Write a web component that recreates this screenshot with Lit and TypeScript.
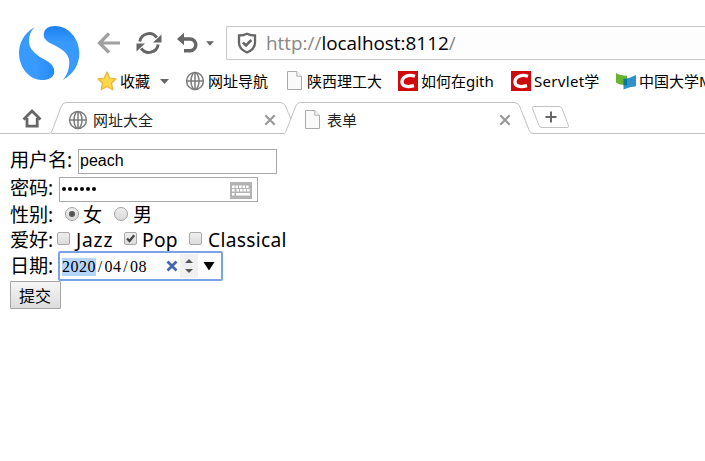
import { LitElement, html, svg, css } from "lit";
import { customElement } from "lit/decorators.js";

const globe = html`<svg width="20" height="20" viewBox="0 0 20 20" fill="none" stroke="#7c7c7c" stroke-width="1.5">
  <circle cx="10" cy="10" r="8.4"/><ellipse cx="10" cy="10" rx="4" ry="8.4"/><path d="M10 1.6V18.4M1.6 10H18.4"/></svg>`;
const page = html`<svg width="16" height="20" viewBox="0 0 16 20" fill="#fafafa" stroke="#aaa">
  <path d="M.5 .5H9.8L14.5 5.2V18.5H.5Z"/><path d="M9.8 .5V5.2H14.5"/></svg>`;
const redC = html`<svg width="20" height="20" viewBox="0 0 20 20"><rect width="20" height="20" fill="#cf0a0c"/>
  <path d="M17 5.3C10.5 2.9 4 5.6 4 10.9C4 15.6 9.5 16.4 16 14.7" fill="none" stroke="#fff" stroke-width="3.3"/></svg>`;
const mooc = html`<svg width="20" height="18" viewBox="0 0 20 18"><path d="M0 1Q4 3.8 11 3.8V13Q4 13.500 0 10.500Z" fill="#65b32e"/>
  <path d="M7.5 7Q14 6.200 20 3V14.200Q14 14.500 7.5 17.500Z" fill="#2d92c9"/><path d="M7.500 7Q9.500 6.900 11 6.400V13L7.500 13.200Z" fill="#08759b"/></svg>`;
const star = html`<svg width="20" height="20" viewBox="0 0 20 20"><path d="M10 1L12.8 7L19.2 7.8L14.5 12.2L15.8 18.8L10 15.5L4.2 18.8L5.5 12.2L.8 7.8L7.2 7Z"
  fill="#fdd74a" stroke="#edb33c" stroke-width="1.2" stroke-linejoin="round"/></svg>`;
const cross = html`<svg class="close" width="12" height="12" viewBox="0 0 12 12"><path d="M1.3 1.3L10.7 10.7M10.7 1.3L1.3 10.7" stroke="#999" stroke-width="2.2"/></svg>`;

const bookmarks = [
  { icon: star, text: "收藏", cls: "w-fav" },
  { icon: globe, text: "网址导航", cls: "w-nav" },
  { icon: page, text: "陕西理工大", cls: "w-uni" },
  { icon: redC, text: "如何在gith", cls: "w-git" },
  { icon: redC, text: "Servlet学", cls: "w-srv" },
  { icon: mooc, text: "中国大学M", cls: "w-mooc" },
];

@customElement("browser-chrome")
class BrowserChrome extends LitElement {
  static styles = css`
    :host { display: block; height: 134px; overflow: hidden; color: #111;
      font-family: "Noto Sans", "Noto Sans CJK SC", sans-serif; }
    svg { display: block; flex: none; }
    .top { display: grid; grid-template-columns: 97px 1fr; height: 102px; }
    .logo { padding: 25px 0 0 18px; }
    .tools { display: flex; align-items: center; margin-top: 26px; height: 34px; }
    .back { margin-right: 15px; } .reload { margin-right: 15px; } .undo { margin-right: 8px; }
    .drop { margin-right: 12px; }
    .address { box-sizing: border-box; flex: 1; height: 34px; border: 1px solid #c8c8c8; border-right: 0;
      border-radius: 2px 0 0 2px; display: flex; align-items: center; padding-left: 10px; background: #fdfdfd; }
    .url { margin-left: 9px; font: 18.9px/30px "Open Sans", sans-serif; color: #888; white-space: nowrap; }
    .url b { font-weight: 400; color: #000; }
    .marks { display: flex; align-items: center; height: 20px; margin-top: 11px; }
    .mark { display: flex; align-items: center; flex: none; font-size: 15px; line-height: 20px; white-space: nowrap; color: #000; }
    .w-fav { width: 88px; } .w-nav { width: 102px; } .w-uni { width: 111px; }
    .w-git { width: 113px; } .w-srv { width: 105px; }
    .w-srv span { letter-spacing: .3px; }
    .mark span { margin-left: 3px; }
    .w-fav .caret { margin-left: 10px; }
    .w-uni span { margin-left: 4px; }
    .strip { display: grid; height: 32px; }
    .strip > * { grid-area: 1 / 1; }
    .tabs { display: flex; align-items: center; height: 35px; font-size: 15px; color: #222; }
    .home { margin-left: 22px; width: 46px; margin-bottom: 2px; }
    .tab { display: flex; align-items: center; box-sizing: border-box; }
    .tab.one { width: 237px; padding-right: 29px; }
    .tab.two { width: 228px; padding-right: 22px; }
    .tab span { margin-left: 5px; } .tab.two span { margin-left: 6px; }
    .tab .close { margin-left: auto; }
  `;
  render() {
    return html`
      <div class="top">
        <svg class="logo" width="62" height="58" viewBox="0 0 62 58">
          <defs><linearGradient id="g" x2="0" y2="1"><stop stop-color="#1c80ee"/><stop offset=".3" stop-color="#3899ff"/></linearGradient>
          <linearGradient id="h" x2="1" y2="0"><stop offset=".5" stop-color="#3899ff"/><stop offset="1" stop-color="#258af5"/></linearGradient></defs>
          <path d="M16.700 2.300C6 8 1 18 1 28C1 43 12 55 23.700 55C31.500 55 36.300 51.500 36.300 46.700C36.300 38 27.500 35.500 22 32C14.500 27 11 22 11 16C11 10 13 5.500 16.700 2.300Z" fill="url(#h)"/>
          <path d="M25.700 10C25.700 4 30.500 1 37 1C50 1 61.300 13 61.300 28.300C61.300 40 55 49.500 44.700 55C49 50.500 51.300 44 51.300 37C51.300 29 44 24 37 20.500C31.500 18 25.700 15 25.700 10Z" fill="url(#g)"/>
        </svg>
        <div>
          <div class="tools">
            <svg class="back" width="24" height="22" viewBox="0 0 24 22" fill="none" stroke="#a0a0a0" stroke-width="3.2"><path d="M23 11H3M12 1.500L2.500 11L12 20.500"/></svg>
            <svg class="reload" width="26" height="24" viewBox="0 0 26 24" fill="none" stroke="#666" stroke-width="3">
              <path d="M3.800 10.500A9.400 9.400 0 0 1 20.800 6.700M22.200 13.500A9.400 9.400 0 0 1 5.200 17.300"/>
              <path d="M25.500 3.500V11.500H17ZM.5 20.500V12.500H9Z" fill="#666" stroke="none"/></svg>
            <svg class="undo" width="21" height="22" viewBox="0 0 21 22"><path d="M5 7H13A5.800 5.800 0 0 1 13 18.700H7" fill="none" stroke="#666" stroke-width="3.400"/><path d="M0 7L7 .8V13.200Z" fill="#666"/></svg>
            <svg class="drop" width="8" height="5" viewBox="0 0 8 5"><path d="M0 .3H8L4 4.700Z" fill="#666"/></svg>
            <div class="address">
              <svg width="20" height="22" viewBox="0 0 20 22" fill="none" stroke="#666" stroke-width="2.300"><path d="M10 1.700Q13.500 3.500 18 3.500V11Q18 17 10 20.500Q2 17 2 11V3.500Q6.500 3.500 10 1.700Z"/><path d="M5.800 10.500L9 13.500L14.300 8" stroke-width="2.600"/></svg>
              <span class="url">http://<b>localhost:8112</b>/</span>
            </div>
          </div>
          <div class="marks">
            ${bookmarks.map((m, i) => html`<div class="mark ${m.cls}">${m.icon}<span>${m.text}</span>${i === 0
              ? html`<svg class="caret" width="9" height="5" viewBox="0 0 9 5"><path d="M0 0H9L4.500 5Z" fill="#666"/></svg>` : ""}</div>`)}
          </div>
        </div>
      </div>
      <div class="strip">
        <svg width="705" height="32" viewBox="0 0 705 32" fill="none" stroke="#c2c2c2">
          <path d="M0 31.500H49Q51 31.500 52 29L61 5Q62.500 .5 66 .5H280Q284 .5 285.500 4L291 17"/>
          <path d="M51 31.500H284Q285.500 31 286 29L295.500 5Q297 .5 301 .5H514Q518 .5 519.500 4L529 28Q530.500 31.500 533 31.500H705"/>
          <path d="M534 4.500H559Q561 4.500 562 6.500L568.500 23.500Q569 25.500 567 25.500H542Q540 25.500 539 23.500L532.500 6.500Q532 4.500 534 4.500Z"/>
          <path d="M545.500 15H556.500M551 9.500V20.500" stroke="#666" stroke-width="2"/>
        </svg>
        <div class="tabs">
          <svg class="home" width="46" height="20" viewBox="0 0 46 20" fill="none" stroke="#666" stroke-width="2.800"><path d="M1.500 10.500L10 2L18.500 10.500M5 9V17.200H15.200V9"/></svg>
          <div class="tab one">${globe}<span>网址大全</span>${cross}</div>
          <div class="tab two">${page}<span>表单</span>${cross}</div>
        </div>
      </div>`;
  }
}

@customElement("profile-form")
class ProfileForm extends LitElement {
  static styles = css`
    :host { display: block; padding: 15px 0 0 10px; color: #000;
      font: 19.2px/25px "Noto Sans", "Noto Sans CJK SC", sans-serif; }
    .row { display: flex; align-items: center; white-space: nowrap; }
    .r1 { height: 25px; margin-bottom: 3px; }
    .r2 { height: 25px; } .r3 { height: 26px; } .r4 { height: 23px; } .r5 { height: 30px; }
    .label { width: 49px; flex: none; letter-spacing: -.2px; padding-bottom: 4px; }
    .r1 .label { width: 68px; }
    .r2 .label { padding-bottom: 5px; }
    .r3 .label { width: 55px; padding-bottom: 1px; }
    .r4 .label { width: 47px; padding-bottom: 0; }
    .r5 .label { width: 48px; padding-bottom: 2px; }
    .box { box-sizing: border-box; width: 199px; height: 25px; border: 1px solid #a9a9a9; background: #fff;
      display: flex; align-items: center; padding: 0 5px 0 1px; font: 16px/20px "Liberation Sans", sans-serif; }
    .r1 .box { padding-bottom: 1px; }
    svg { display: block; flex: none; }
    .keys { margin-left: auto; margin-top: 2px; }
    .radio { box-sizing: border-box; width: 14px; height: 14px; border: 1px solid #a2a2a2; border-radius: 50%;
      background: linear-gradient(#eee, #d9d9d9); display: grid; place-items: center; flex: none; margin-bottom: 2px; }
    .radio.on::after { content: ""; width: 6px; height: 6px; border-radius: 50%; background: #555; }
    .r3 .txt { margin-left: 5px; padding-bottom: 1px; } .r3 .first { width: 31px; margin-left: 4px; }
    .check { box-sizing: border-box; width: 13px; height: 13px; border: 1px solid #a8a8a8; border-radius: 2px;
      background: linear-gradient(#eee, #dcdcdc); flex: none; margin-bottom: 3px; }
    .r4 .txt { margin-left: 6px; letter-spacing: .3px; }
    .r4 .jazz { width: 48px; letter-spacing: .8px; } .r4 .pop { width: 47px; margin-left: 5px; }
    .date { box-sizing: border-box; width: 165px; height: 30px; border: 2px solid #7ba2e7; border-radius: 2px;
      display: flex; align-items: center; padding-left: 2px; background: #fff; }
    .digits { font: 16px/18px "Liberation Serif", serif; letter-spacing: .5px; width: 104px; padding-top: 1px; }
    .digits mark { background: #b4d5fe; color: inherit; display: inline-block; }
    .digits i { font-style: normal; display: inline-block; width: 8.500px; text-align: center; }
    .spin { width: 18px; height: 24px; background: #f0f0f0; display: grid; place-items: center; margin: 0 5px 0 2px; }
    .submit { box-sizing: border-box; display: block; width: 51px; height: 28px; border: 1px solid #a5a5a5; border-radius: 1px; padding: 0 1px 1px 0;
      background: linear-gradient(#f6f6f6, #dcdcdc); font: 16px/24px "Noto Sans CJK SC", sans-serif; color: #000; }
  `;
  render() {
    const keys = [[2, 3.500], [5.500, 3.500], [9, 3.500], [12.500, 3.500], [16, 3.500], [2, 7], [6.500, 7], [10, 7], [13.500, 7], [17, 7]];
    return html`
      <div class="row r1"><span class="label">用户名:</span><div class="box">peach</div></div>
      <div class="row r2"><span class="label">密码:</span><div class="box">
        <svg width="36" height="6" viewBox="0 0 36 6">${[0, 1, 2, 3, 4, 5].map(i => svg`<circle cx=${3 + i * 6} cy="2" r="2" fill="#000"/>`)}</svg>
        <svg class="keys" width="22" height="17" viewBox="0 0 22 17"><rect width="22" height="17" fill="#b3b3b3"/>
          ${keys.map(([x, y]) => svg`<rect x=${x} y=${y} width="2.6" height="2.5" fill="#fff"/>`)}
          <path d="M2 11H4.500V13.500H2ZM6 11H20V13.500H6Z" fill="#fff"/></svg></div></div>
      <div class="row r3"><span class="label">性别:</span><i class="radio on"></i><span class="txt first">女</span><i class="radio"></i><span class="txt">男</span></div>
      <div class="row r4"><span class="label">爱好:</span><i class="check"></i><span class="txt jazz">Jazz</span>
        <svg class="check" viewBox="0 0 11 11"><path d="M2 5.500L4.500 8L9.200 2.200" fill="none" stroke="#444" stroke-width="2.300"/></svg><span class="txt pop">Pop</span>
        <i class="check"></i><span class="txt">Classical</span></div>
      <div class="row r5"><span class="label">日期:</span><div class="date">
        <span class="digits"><mark>2020</mark><i>/</i>04<i>/</i>08</span>
        <svg width="12" height="12" viewBox="0 0 12 12"><path d="M1.500 1.500L10.500 10.500M10.500 1.500L1.500 10.500" stroke="#4169b0" stroke-width="2.800"/></svg>
        <div class="spin"><svg width="8" height="14" viewBox="0 0 8 14" fill="#555"><path d="M0 4L4 0L8 4ZM0 10H8L4 14Z"/></svg></div>
        <svg width="12" height="9" viewBox="0 0 12 9"><path d="M.5 0H11.500L6 8.500Z"/></svg>
      </div></div>
      <button class="submit">提交</button>`;
  }
}

@customElement("app-root")
class AppRoot extends LitElement {
  static styles = css`:host { display: block; height: 461px; overflow: hidden; background: #fff; }`;
  render() {
    return html`<browser-chrome></browser-chrome><profile-form></profile-form>`;
  }
}
